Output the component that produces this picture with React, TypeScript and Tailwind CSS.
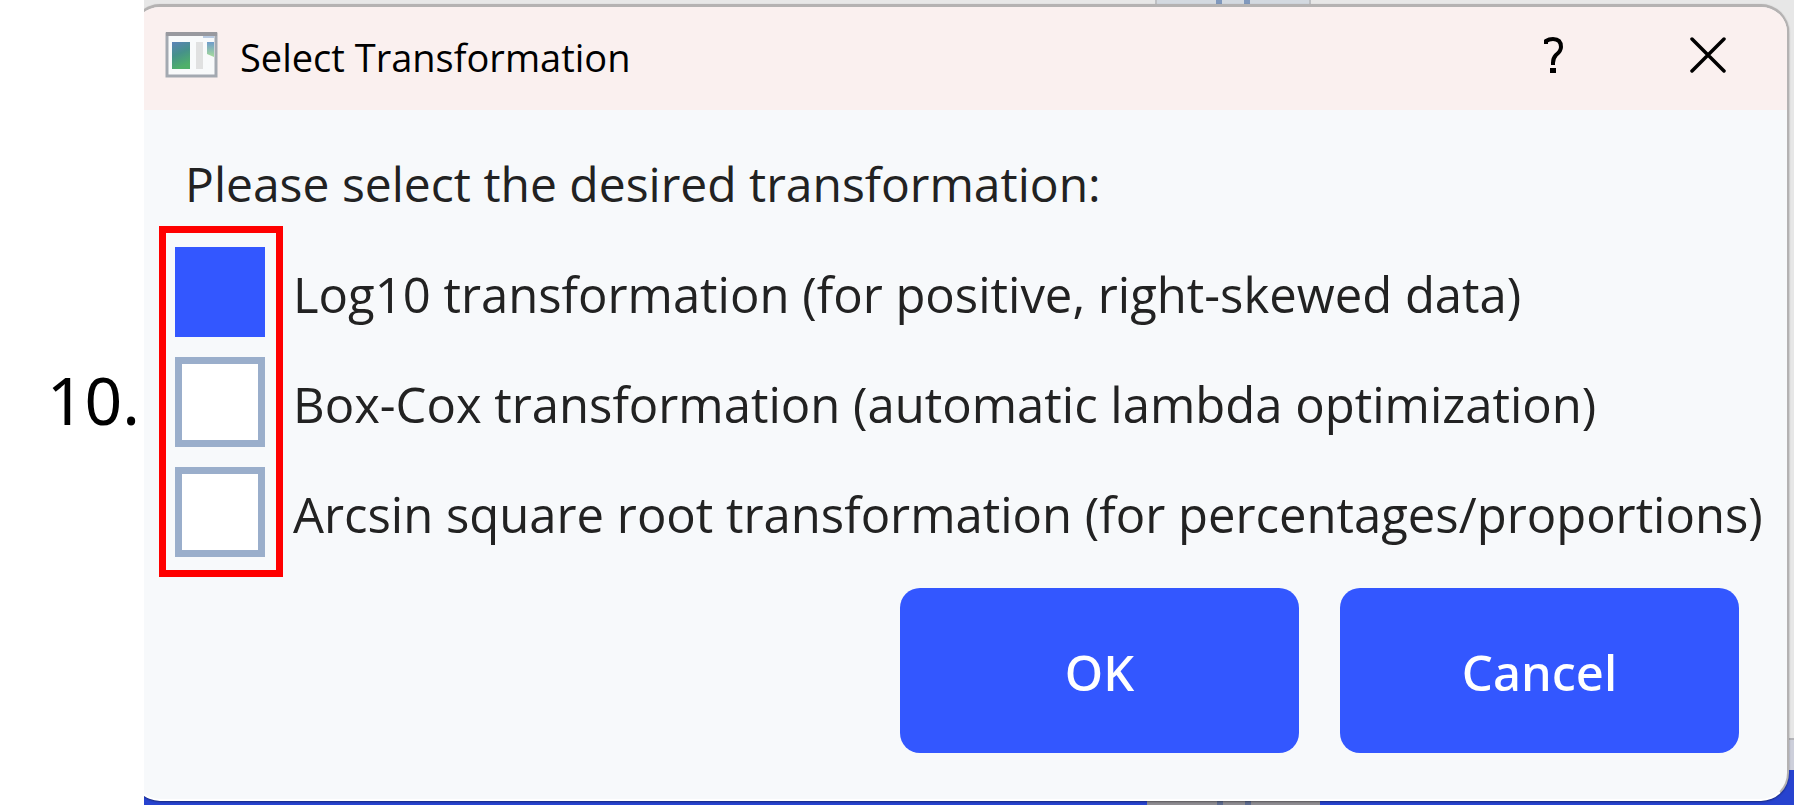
import { useState } from "react";

const OPTIONS = [
  "Log10 transformation (for positive, right-skewed data)",
  "Box-Cox transformation (automatic lambda optimization)",
  "Arcsin square root transformation (for percentages/proportions)",
];

function WindowIcon() {
  return (
    <svg viewBox="0 0 54 48" className="h-12 w-[54px] shrink-0" aria-hidden="true">
      <defs>
        <linearGradient id="pane" x1="0" y1="0" x2="0.3" y2="1">
          <stop offset="0" stopColor="#5b82b8" />
          <stop offset="0.5" stopColor="#46918a" />
          <stop offset="1" stopColor="#4fb06a" />
        </linearGradient>
        <linearGradient id="side" x1="0" y1="0" x2="0" y2="1">
          <stop offset="0" stopColor="#6f9ccb" />
          <stop offset="1" stopColor="#a5dc9a" />
        </linearGradient>
      </defs>
      <rect x="3" y="3" width="49" height="42" fill="#f8fafb" stroke="#a3a9b1" strokeWidth="3" />
      <rect x="2" y="1" width="51" height="4" fill="#98999f" />
      <rect x="39" y="5" width="11" height="2" fill="#b9cbe2" />
      <rect x="8" y="11" width="18" height="27" fill="url(#pane)" />
      <rect x="32" y="11" width="7" height="27" fill="#e0e1e1" />
      <path d="M43 11h7v15l-7-3z" fill="url(#side)" />
    </svg>
  );
}

function Backdrop() {
  return (
    <div className="absolute inset-0 flex flex-col bg-[#e7e7e7]" aria-hidden="true">
      <div className="flex h-5 pl-[61.3%]">
        <div className="flex w-[156px] justify-center gap-[22px] border-x-2 border-[#bfc1c4] bg-[#d3d9e0]">
          <span className="w-[6px] bg-[#8199bd]" />
          <span className="w-[6px] bg-[#8199bd]" />
        </div>
      </div>
      <div className="flex-1" />
      <div className="h-8 border-t-2 border-[#b4b4b8] bg-[#cdcfdb]" />
      <div className="flex h-[35px] items-end bg-[#2743cf] pl-[60.8%]">
        <div className="flex h-[5px] w-[173px] justify-center gap-[22px] bg-[#8f8d92]">
          <span className="w-[6px] bg-[#5e6c8e]" />
          <span className="w-[6px] bg-[#5e6c8e]" />
        </div>
      </div>
    </div>
  );
}

export default function App() {
  const [checked, setChecked] = useState([true, false, false]);
  const toggle = (index: number) =>
    setChecked(checked.map((value, i) => (i === index ? !value : value)));

  return (
    <div className="flex min-h-screen bg-white font-['Open_Sans','Noto_Sans',sans-serif] text-black">
      <div className="flex w-36 shrink-0 items-center justify-end pr-1 pb-2">
        <span className="font-['Noto_Sans',sans-serif] text-[66px] leading-none">10.</span>
      </div>
      <main className="relative flex min-w-0 flex-1 overflow-hidden pt-1 pr-[5px] pb-1">
        <Backdrop />
        <section
          role="dialog"
          aria-labelledby="dialog-title"
          className="relative -ml-3 flex flex-1 flex-col overflow-hidden rounded-[28px] border-2 border-t-[3px] border-[#b4b2b2] border-b-white bg-[#f7f9fb] shadow-[0_1px_2px_#00000066]"
        >
          <header className="flex h-[103px] shrink-0 items-center bg-[#faf0ef] pr-[61px] pb-2 pl-[30px]">
            <WindowIcon />
            <h1 id="dialog-title" className="ml-[22px] flex-1 pt-1 text-[38px] leading-[56px]">
              Select Transformation
            </h1>
            <button type="button" aria-label="Help" className="flex w-16 justify-center text-black">
              <svg viewBox="0 0 22 36" className="h-9 w-[22px]" fill="none" stroke="currentColor" aria-hidden="true">
                <path d="M3 7V4Q6 2 10 2Q18 2 18 10Q18 14 13 18Q10 21 10 26V28" strokeWidth="4" />
                <path d="M10 31V36" strokeWidth="6" />
              </svg>
            </button>
            <button type="button" aria-label="Close" className="ml-[104px] flex w-9 justify-center text-black">
              <svg viewBox="0 0 36 36" className="size-9" fill="none" stroke="currentColor" aria-hidden="true">
                <path d="M2 2L34 34M34 2L2 34" strokeWidth="3.5" strokeLinecap="round" />
              </svg>
            </button>
          </header>
          <form
            className="flex flex-1 flex-col pt-[38px] pr-12 pb-[46px] pl-[41px] text-[49px] text-[#222222]"
            onSubmit={(event) => event.preventDefault()}
          >
            <fieldset className="relative">
              <legend className="pl-[10px] text-[48px] leading-[72px] whitespace-nowrap">
                Please select the desired transformation:
              </legend>
              <div className="flex flex-col gap-5 pt-[27px]">
                {OPTIONS.map((label, index) => (
                  <label key={label} className="flex h-[90px] items-center gap-7 whitespace-nowrap">
                    <input
                      type="checkbox"
                      checked={checked[index]}
                      onChange={() => toggle(index)}
                      className="size-[90px] shrink-0 appearance-none border-[7px] border-[#9aaecb] bg-white checked:border-[#3357ff] checked:bg-[#3357ff]"
                    />
                    <span className="pt-[6px]">{label}</span>
                  </label>
                ))}
              </div>
              <div className="pointer-events-none absolute top-[6px] -bottom-5 -left-4 w-[124px] border-[7px] border-[#ff0000]" />
            </fieldset>
            <div className="mt-[31px] flex justify-end gap-[41px] font-['Noto_Sans',sans-serif] font-medium text-white">
              <button type="submit" className="h-[165px] w-[399px] rounded-[20px] bg-[#3357ff] pt-1">
                OK
              </button>
              <button type="button" className="h-[165px] w-[399px] rounded-[20px] bg-[#3357ff] pt-1">
                Cancel
              </button>
            </div>
          </form>
        </section>
      </main>
    </div>
  );
}
